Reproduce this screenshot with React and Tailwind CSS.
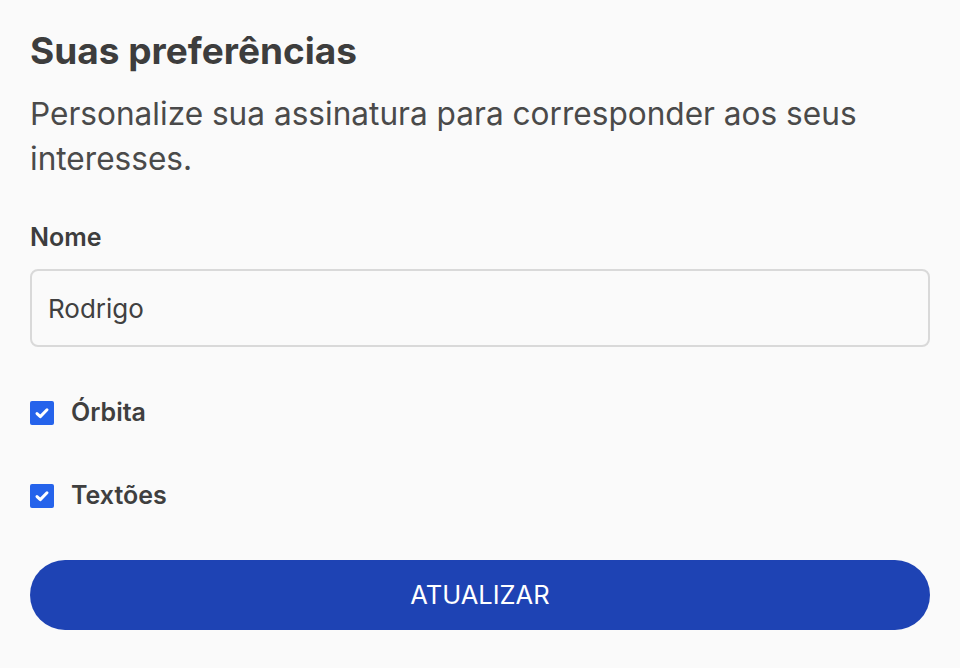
import React from "react";

function Check({ label }) {
  return (
    <label className="flex items-center gap-[17px] h-[24px]">
      <span className="w-[24px] h-[24px] rounded-[2px] bg-[#2563eb] flex items-center justify-center">
        <svg width="24" height="24" viewBox="0 0 24 24" fill="none">
          <path d="M7 12.6 L10.3 15.6 L17 8.8" stroke="white" strokeWidth="3" strokeLinecap="round" strokeLinejoin="round" />
        </svg>
      </span>
      <span className="text-[25px] font-semibold text-[#3f3f3f]">{label}</span>
    </label>
  );
}

export default function App() {
  return (
    <div className="w-[960px] h-[668px] bg-[#fafafa] px-[30px] pt-[26px] text-[#404040]" style={{ fontFamily: "Inter, 'Noto Sans', sans-serif" }}>
      <h1 className="text-[37px] font-bold leading-[50px] text-[#3d3d3d]">Suas preferências</h1>
      <p className="mt-[15px] text-[31.6px] leading-[45px] text-[#4a4a4a] pr-[40px]">
        Personalize sua assinatura para corresponder aos seus interesses.
      </p>
      <div className="mt-[41px] text-[25px] font-semibold leading-[30px] text-[#3d3d3d]">Nome</div>
      <div className="mt-[17px] h-[78px] rounded-[8px] border-2 border-[#d9d9d9] flex items-center px-[16px] text-[26px] text-[#404040]">
        Rodrigo
      </div>
      <div className="mt-[54px] flex flex-col gap-[59px]">
        <Check label="Órbita" />
        <Check label="Textões" />
      </div>
      <button className="mt-[52px] w-full h-[70px] rounded-full bg-[#1e43b4] text-white text-[25.5px]">
        ATUALIZAR
      </button>
    </div>
  );
}
